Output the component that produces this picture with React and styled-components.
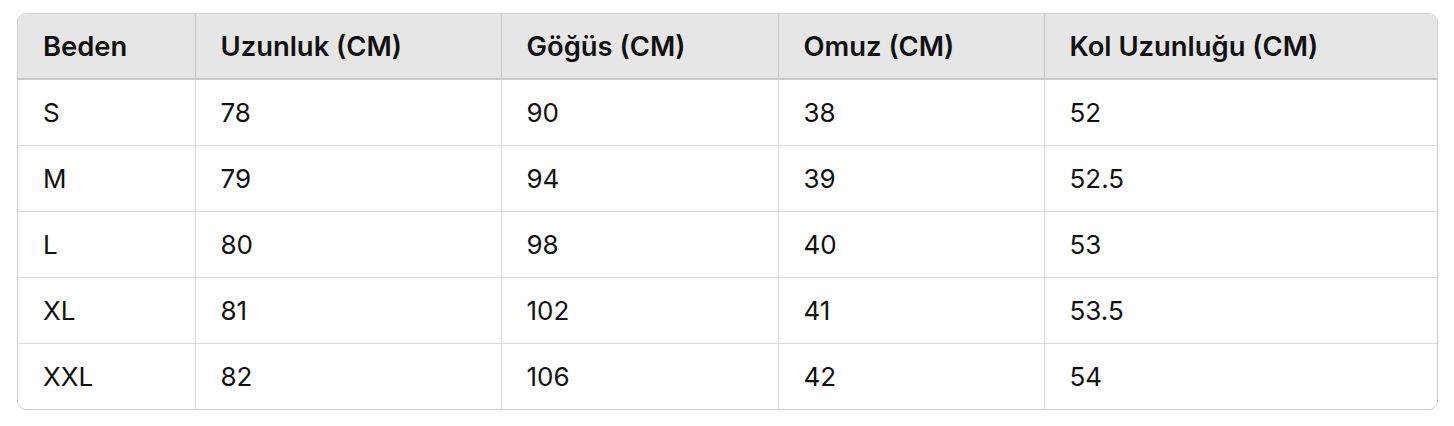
import React from 'react';
import styled, { createGlobalStyle } from 'styled-components';

const GlobalStyle = createGlobalStyle`
  body {
    margin: 0;
    background: #ffffff;
    font-family: Inter, "Noto Sans", sans-serif;
  }
`;

const Page = styled.div`
  padding: 13px 16px 0 17px;
`;

const TableWrap = styled.div`
  border: 1px solid #cfcfcf;
  border-radius: 9px;
  overflow: hidden;
`;

const Table = styled.table`
  width: 100%;
  border-collapse: collapse;
  table-layout: fixed;
  color: #111;
`;

const HeadCell = styled.th`
  height: 64px;
  padding: 0 25px;
  background: #e6e6e6;
  border-bottom: 2px solid #c9c9c9;
  border-left: 1px solid #c9c9c9;
  text-align: left;
  font-size: 27.4px;
  font-weight: 600;
  &:first-child {
    border-left: none;
  }
`;

const Cell = styled.td`
  height: 65px;
  padding: 0 25px;
  border-top: 1px solid #dcdcdc;
  border-left: 1px solid #dcdcdc;
  font-size: 26px;
  font-weight: 400;
  &:first-child {
    border-left: none;
  }
`;

const Row = styled.tr`
  &:first-child td {
    border-top: none;
  }
`;

const columns = [
  { title: 'Beden', width: 177 },
  { title: 'Uzunluk (CM)', width: 306 },
  { title: 'Göğüs (CM)', width: 277 },
  { title: 'Omuz (CM)', width: 266 },
  { title: 'Kol Uzunluğu (CM)', width: null },
];

const rows = [
  ['S', '78', '90', '38', '52'],
  ['M', '79', '94', '39', '52.5'],
  ['L', '80', '98', '40', '53'],
  ['XL', '81', '102', '41', '53.5'],
  ['XXL', '82', '106', '42', '54'],
];

const App = () => (
  <>
    <GlobalStyle />
    <Page>
      <TableWrap>
        <Table>
          <colgroup>
            {columns.map((c) => (
              <col key={c.title} style={c.width ? { width: c.width } : undefined} />
            ))}
          </colgroup>
          <thead>
            <tr>
              {columns.map((c) => (
                <HeadCell key={c.title}>{c.title}</HeadCell>
              ))}
            </tr>
          </thead>
          <tbody>
            {rows.map((r) => (
              <Row key={r[0]}>
                {r.map((v, i) => (
                  <Cell key={i}>{v}</Cell>
                ))}
              </Row>
            ))}
          </tbody>
        </Table>
      </TableWrap>
    </Page>
  </>
);

export default App;
